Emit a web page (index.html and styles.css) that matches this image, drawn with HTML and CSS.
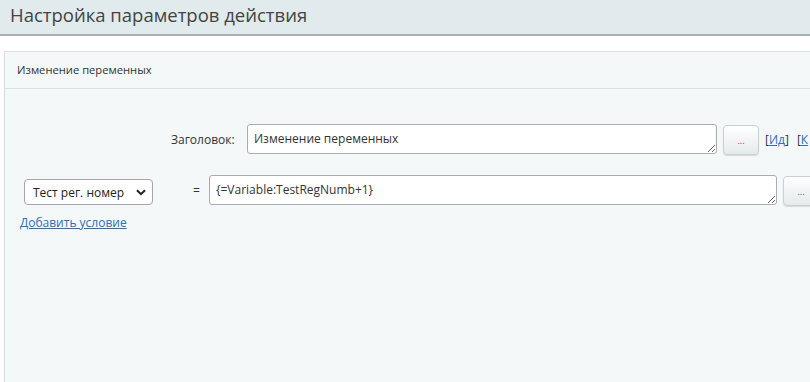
FILE: index.html
```html
<!DOCTYPE html>
<html lang="ru">
<head>
<meta charset="utf-8">
<title>Настройка параметров действия</title>
<link rel="stylesheet" href="styles.css">
</head>
<body>
<header class="topbar">
  <h1 class="title">Настройка параметров действия</h1>
</header>
<section class="panel">
  <div class="panel-head">Изменение переменных</div>
  <div class="panel-body">
    <div class="row row-title">
      <label class="label" for="t1">Заголовок:</label>
      <textarea id="t1" class="field field-title">Изменение переменных</textarea>
      <button class="dots" type="button">...</button>
      <span class="bracket">[<a href="#">Ид</a>]</span>
      <span class="bracket">[<a href="#">К</a></span>
    </div>
    <div class="row row-var">
      <div class="select">
        <span>Тест рег. номер</span>
        <svg class="chev" width="10" height="7" viewBox="0 0 10 7"><path d="M1 1.2 L5 5.2 L9 1.2" fill="none" stroke="#222" stroke-width="2"/></svg>
      </div>
      <span class="eq">=</span>
      <textarea class="field field-var">{=Variable:TestRegNumb+1}</textarea>
      <button class="dots" type="button">...</button>
    </div>
    <a class="add" href="#">Добавить условие</a>
  </div>
</section>
</body>
</html>
```
FILE: styles.css
```css
html, body {
  margin: 0;
  padding: 0;
  background: #ffffff;
  overflow: hidden;
}
body {
  font-family: "Open Sans", "Noto Sans", sans-serif;
  color: #333;
  width: 810px;
  height: 382px;
}
.topbar {
  box-sizing: border-box;
  height: 36px;
  background: #e1eaec;
  border-bottom: 2px solid #a9b1b3;
}
.title {
  margin: 0;
  padding-left: 10px;
  font-size: 18.5px;
  font-weight: 400;
  line-height: 30px;
  color: #444;
}
.panel {
  margin: 15px 0 0 4px;
  background: #f4f8f9;
  border-top: 1px solid #dce2e4;
  border-left: 1px solid #d3dcdf;
  height: 340px;
}
.panel-head {
  height: 36px;
  line-height: 36px;
  padding-left: 12px;
  font-size: 11.2px;
  color: #333;
  border-bottom: 1px solid #dce2e4;
}
.panel-body {
  padding-top: 34px;
}
.row {
  display: flex;
  align-items: center;
  white-space: nowrap;
}
.row-title {
  padding-left: 166px;
  height: 32px;
}
.label {
  flex: none;
  font-size: 12px;
  color: #333;
  width: 76px;
}
.field {
  flex: none;
  box-sizing: border-box;
  height: 30px;
  border: 1px solid #a9adaf;
  border-radius: 3px;
  background: #fff;
  font-family: inherit;
  font-size: 12px;
  color: #333;
  padding: 5px 6px;
  margin: 0;
  overflow: hidden;
  resize: both;
}
.field-title {
  width: 470px;
}
.dots {
  flex: none;
  box-sizing: border-box;
  width: 36px;
  height: 30px;
  margin: 2px 0 0 6px;
  border: 1px solid #c8d0d3;
  border-radius: 4px;
  background: linear-gradient(#ffffff, #e4eaec);
  box-shadow: 0 1px 1px rgba(0,0,0,0.12);
  color: #555;
  font-size: 9px;
  padding: 0;
  font-family: inherit;
}
.bracket {
  flex: none;
  font-size: 12px;
  color: #333;
  margin-left: 6px;
}
.bracket + .bracket {
  margin-left: 8px;
}
.bracket a, .add {
  color: #2a6fb8;
}
.row-var {
  margin-top: 20px;
  padding-left: 19px;
  height: 30px;
}
.select {
  flex: none;
  box-sizing: border-box;
  width: 129px;
  height: 26px;
  margin-top: 4px;
  border: 1px solid #a6a6a6;
  border-radius: 4px;
  background: #fff;
  display: flex;
  align-items: center;
  justify-content: space-between;
  padding: 0 6px 0 8px;
  font-size: 12px;
  color: #222;
  overflow: hidden;
}
.chev {
  flex: none;
}
.eq {
  flex: none;
  font-size: 12px;
  margin-left: 40px;
  width: 16px;
}
.field-var {
  width: 568px;
}
.add {
  display: inline-block;
  margin: 9px 0 0 15px;
  font-size: 12px;
}
```
